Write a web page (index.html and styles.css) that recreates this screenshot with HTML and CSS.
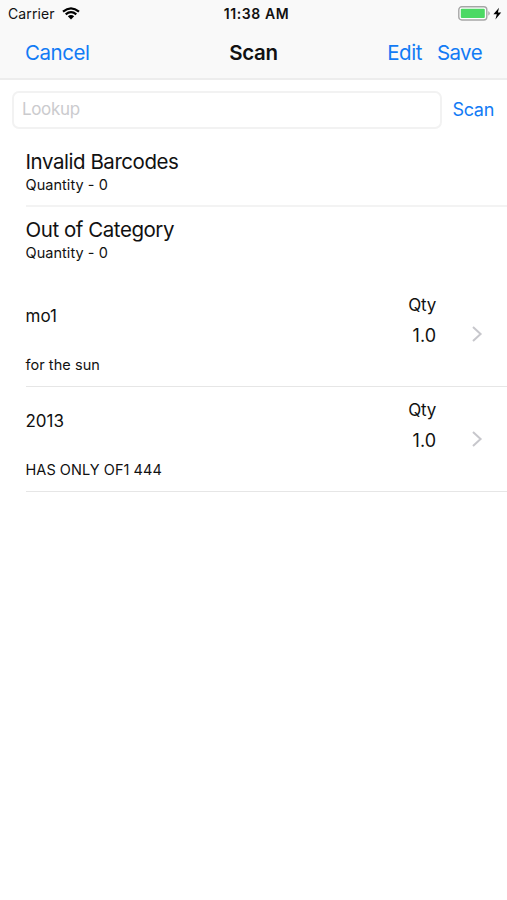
FILE: index.html
```html
<!DOCTYPE html>
<html lang="en">
<head>
    <meta charset="UTF-8">
    <meta name="viewport" content="width=device-width, initial-scale=1.0">
    <title>Scan</title>
    <link rel="stylesheet" href="styles.css">
</head>
<body>
    <header class="header">
        <div class="status-bar">
            <div class="carrier">
                <span>Carrier</span>
                <svg class="wifi" width="18" height="13" viewBox="0 0 18 13">
                    <path d="M1 4.7Q9-1.8 17 4.7M3.7 7.4Q9 3 14.3 7.4" fill="none" stroke="#000" stroke-width="2.2"/>
                    <path d="M5.8 9.3Q9 6.8 12.2 9.3L9 12.5Z"/>
                </svg>
            </div>
            <div class="time">11:38 AM</div>
            <div class="power">
                <svg width="44" height="16" viewBox="0 0 44 16">
                    <rect x="0.8" y="0.8" width="28" height="13.2" rx="3" fill="#fff" stroke="#a6a6a6" stroke-width="1.4"/>
                    <rect x="2.8" y="2.7" width="24" height="9.4" rx="1" fill="#4cd964"/>
                    <path d="M30.3 5Q33.4 7.4 30.3 9.8Z" fill="#a6a6a6"/>
                    <path d="M41 1.7L35.4 8.3H38.8L37.4 13.5L43.2 6.6H39.9Z"/>
                </svg>
            </div>
        </div>
        <nav class="nav-bar">
            <a class="nav-cancel">Cancel</a>
            <h1 class="nav-title">Scan</h1>
            <div class="nav-actions">
                <a class="nav-edit">Edit</a>
                <a class="nav-save">Save</a>
            </div>
        </nav>
    </header>

    <div class="search">
        <input class="lookup" type="text" placeholder="Lookup">
        <a class="scan">Scan</a>
    </div>

    <section class="summary">
        <div class="summary-row">
            <h2>Invalid Barcodes</h2>
            <p>Quantity - 0</p>
        </div>
        <div class="summary-row">
            <h2>Out of Category</h2>
            <p>Quantity - 0</p>
        </div>
    </section>

    <section class="items">
        <div class="item">
            <div class="info">
                <div class="name">mo1</div>
                <div class="desc">for the sun</div>
            </div>
            <div class="qty">
                <div class="qty-label">Qty</div>
                <div class="qty-value">1.0</div>
            </div>
            <svg class="chevron" width="12" height="18" viewBox="0 0 12 18">
                <path d="M2 2L9.6 9L2 16"/>
            </svg>
        </div>
        <div class="item">
            <div class="info">
                <div class="name">2013</div>
                <div class="desc">HAS ONLY OF1 444</div>
            </div>
            <div class="qty">
                <div class="qty-label">Qty</div>
                <div class="qty-value">1.0</div>
            </div>
            <svg class="chevron" width="12" height="18" viewBox="0 0 12 18">
                <path d="M2 2L9.6 9L2 16"/>
            </svg>
        </div>
    </section>
</body>
</html>
```
FILE: styles.css
```css
* {
    box-sizing: border-box;
}

body {
    margin: 0;
    height: 100vh;
    overflow: hidden;
    font-family: Inter, "Liberation Sans", sans-serif;
    background-color: #fff;
    color: #111;
}

h1, h2, p {
    margin: 0;
    font-weight: 400;
}

/* Header */
.header {
    height: 80px;
    background-color: #f9f9f9;
    border-bottom: 2px solid #ededed;
}

.status-bar {
    display: grid;
    grid-template-columns: 1fr auto 1fr;
    align-items: center;
    height: 27px;
    padding: 0 5px 0 8px;
    font-size: 14px;
}

.carrier {
    display: flex;
    align-items: center;
    gap: 7px;
    letter-spacing: 0.1px;
}

.time {
    padding-left: 3px;
    font-size: 14px;
    font-weight: 600;
    letter-spacing: 0.6px;
}

.power {
    display: flex;
    justify-content: flex-end;
}

.nav-bar {
    display: grid;
    grid-template-columns: 1fr auto 1fr;
    align-items: center;
    height: 50px;
    padding: 0 25px;
    font-size: 20.5px;
    letter-spacing: -0.45px;
}

.nav-title {
    font-size: 20.5px;
    font-weight: 600;
    letter-spacing: -0.3px;
}

.nav-actions {
    display: flex;
    justify-content: flex-end;
    gap: 15px;
}

.nav-save {
    letter-spacing: -0.6px;
}

.nav-cancel, .nav-actions, .scan {
    color: #127bf5;
}

/* Lookup */
.search {
    display: flex;
    align-items: center;
    gap: 10px;
    padding: 11px 13px 0 12px;
}

.lookup {
    flex: 1;
    min-width: 0;
    height: 38px;
    padding: 0 8px 2px;
    border: 2px solid #f2f2f2;
    border-radius: 7px;
    font-family: inherit;
    font-size: 17px;
    letter-spacing: -0.35px;
    outline: none;
}

.lookup::placeholder {
    color: #cbcbce;
}

.scan {
    padding-bottom: 2px;
    font-size: 18px;
    letter-spacing: -0.3px;
}

/* Totals */
.summary-row {
    height: 69px;
    margin-left: 25.5px;
    padding-top: 10px;
}

.summary-row:first-child {
    height: 78px;
    padding-top: 20px;
    border-bottom: 2px solid #f3f3f3;
}

.summary-row h2 {
    font-size: 20.5px;
    line-height: 25px;
    letter-spacing: -0.45px;
}

.summary-row p {
    font-size: 14.5px;
    line-height: 22px;
    letter-spacing: 0.05px;
}

/* Scanned items */
.items {
    padding-top: 6px;
}

.item {
    display: flex;
    height: 105px;
    margin-left: 25.5px;
    border-bottom: 1px solid #e6e6e6;
}

.info {
    flex: 1;
    padding-top: 22px;
}

.name {
    font-size: 17px;
    line-height: 24px;
}

.desc {
    margin-top: 27px;
    font-size: 14.5px;
    line-height: 20px;
    letter-spacing: 0.05px;
}

.qty {
    padding-top: 11px;
    text-align: right;
}

.qty-label {
    font-size: 17px;
    line-height: 24px;
    letter-spacing: -0.2px;
}

.qty-value {
    margin-top: 6px;
    font-size: 18px;
    line-height: 26px;
}

.chevron {
    margin: 43px 24px 0 35px;
}

.chevron path {
    fill: none;
    stroke: #c7c7cc;
    stroke-width: 2;
}
```
